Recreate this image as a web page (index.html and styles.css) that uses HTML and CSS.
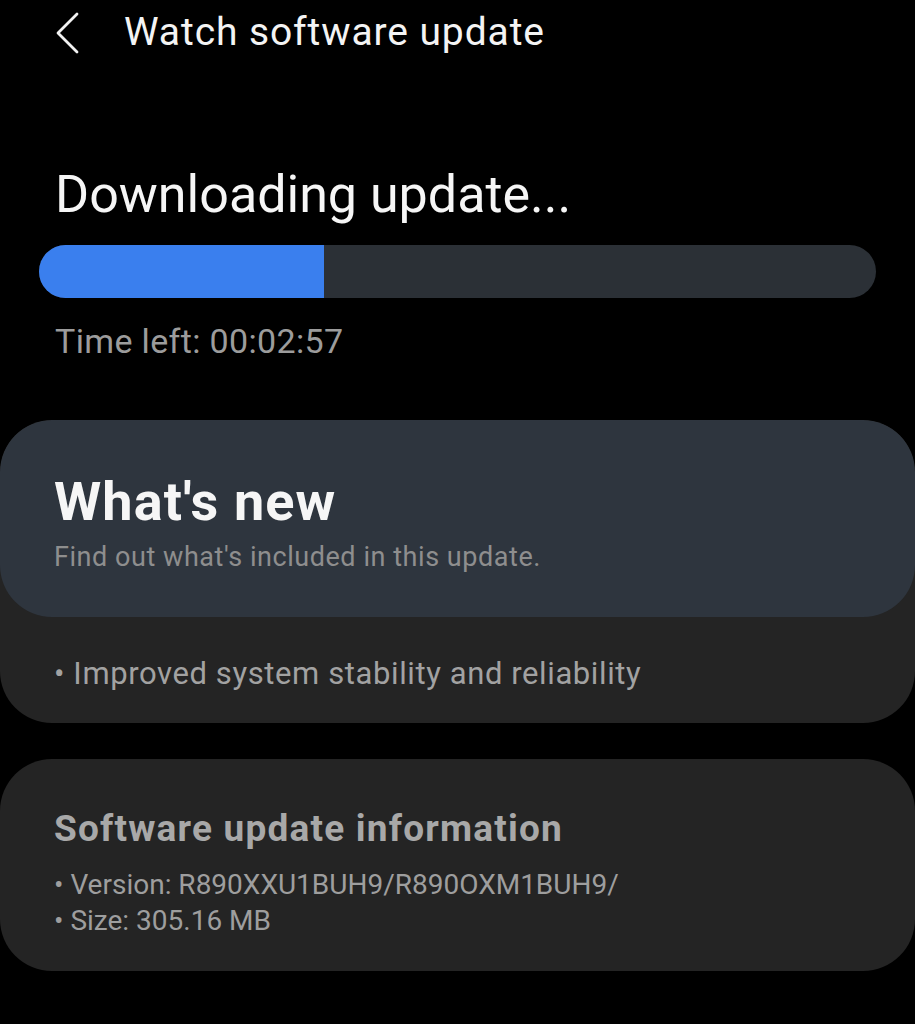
FILE: index.html
```html
<!DOCTYPE html>
<html lang="en">
<head>
<meta charset="utf-8">
<title>Watch software update</title>
<link rel="stylesheet" href="styles.css">
</head>
<body>
<header class="topbar">
  <span class="back">
    <svg width="26" height="44" viewBox="0 0 26 44" aria-hidden="true">
      <polyline points="22,3 3,22 22,41" fill="none" stroke="#f2f2f2" stroke-width="2.8" stroke-linecap="round" stroke-linejoin="round"/>
    </svg>
  </span>
  <h1 class="title">Watch software update</h1>
</header>

<section class="download">
  <h2 class="dl-title">Downloading update...</h2>
  <div class="bar"><div class="bar-fill" style="width:34%"></div></div>
  <p class="time">Time left: 00:02:57</p>
</section>

<section class="card">
  <div class="card-head">
    <h3 class="new-title">What's new</h3>
    <p class="new-sub">Find out what's included in this update.</p>
  </div>
  <div class="card-body">
    <p class="bullet">• Improved system stability and reliability</p>
  </div>
</section>

<section class="card info">
  <h3 class="info-title">Software update information</h3>
  <p class="info-line first">• Version: R890XXU1BUH9/R890OXM1BUH9/</p>
  <p class="info-line">• Size: 305.16 MB</p>
</section>
</body>
</html>
```
FILE: styles.css
```css
* { box-sizing: border-box; }
html, body {
  margin: 0;
  padding: 0;
  background: #000;
}
body {
  width: 915px;
  height: 1024px;
  overflow: hidden;
  font-family: Roboto, "Liberation Sans", sans-serif;
  color: #fff;
}
h1, h2, h3, p { margin: 0; font-weight: 400; }

.topbar {
  display: flex;
  align-items: flex-start;
  padding: 11px 0 0 55px;
  height: 60px;
}
.back {
  display: block;
  width: 26px;
  height: 44px;
}
.back svg { display: block; }
.title {
  margin-left: 43px;
  margin-top: 2px;
  font-size: 39px;
  line-height: 38px;
  letter-spacing: 0.9px;
  color: #f4f4f4;
}

.download {
  padding: 109px 39px 0 39px;
}
.dl-title {
  padding-left: 16px;
  font-size: 52px;
  line-height: 52px;
  color: #f6f6f6;
}
.bar {
  margin-top: 24px;
  height: 53px;
  border-radius: 27px;
  background: #2b3036;
  overflow: hidden;
}
.bar-fill {
  height: 100%;
  background: #3a7fee;
}
.time {
  margin-top: 26px;
  padding-left: 16px;
  font-size: 34px;
  line-height: 34px;
  letter-spacing: 0.35px;
  color: #9c9c9c;
}

.card {
  margin-top: 62px;
  border-radius: 52px;
  background: #242424;
  overflow: hidden;
}
.card-head {
  background: #2e353e;
  border-radius: 52px;
  padding: 55px 54px 46px;
}
.new-title {
  font-size: 54px;
  line-height: 54px;
  font-weight: 700;
  letter-spacing: 1.1px;
  color: #f6f6f6;
}
.new-sub {
  margin-top: 15px;
  font-size: 27px;
  line-height: 27px;
  letter-spacing: 0.55px;
  color: #8e8e8e;
}
.card-body {
  padding: 41px 54px 34px;
}
.bullet {
  font-size: 31px;
  line-height: 31px;
  letter-spacing: 0.6px;
  color: #a2a2a2;
}

.card.info {
  margin-top: 36px;
  padding: 52px 54px 36px;
}
.info-title {
  font-size: 37px;
  line-height: 36px;
  font-weight: 700;
  letter-spacing: 1.2px;
  color: #a8a8a8;
}
.info-line {
  margin-top: 7px;
  font-size: 28px;
  line-height: 29px;
  color: #9e9e9e;
}
.info-line.first { margin-top: 23px; }
```
